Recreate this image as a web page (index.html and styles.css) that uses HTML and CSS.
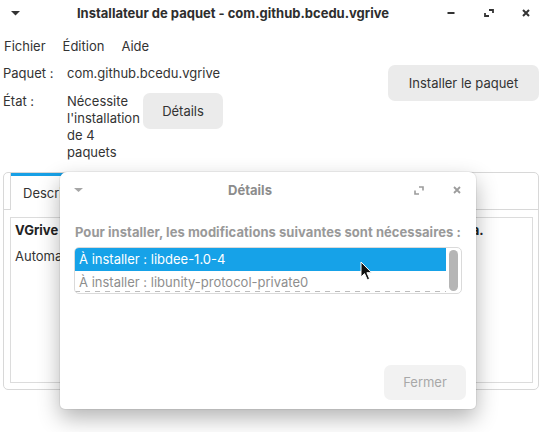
FILE: index.html
```html
<!DOCTYPE html>
<html lang="fr">
<head>
<meta charset="utf-8">
<title>Installateur de paquet</title>
<link rel="stylesheet" href="styles.css">
</head>
<body>
<div class="window">
  <header class="titlebar">
    <div class="tb-menu"><svg width="9" height="5" viewBox="0 0 9 5"><polygon points="0,0 9,0 4.5,4.5" fill="#333"/></svg></div>
    <div class="tb-title">Installateur de paquet - com.github.bcedu.vgrive</div>
    <div class="tb-btn"><svg width="8" height="2" viewBox="0 0 8 2"><rect x="0.5" y="0" width="7" height="2" fill="#333"/></svg></div>
    <div class="tb-btn"><svg width="10" height="8" viewBox="0 0 10 8"><path d="M5 1H9V4M1 4V7H5" fill="none" stroke="#333" stroke-width="1.8"/></svg></div>
    <div class="tb-btn"><svg width="8" height="8" viewBox="0 0 8 8"><path d="M1 1L7 7M7 1L1 7" stroke="#333" stroke-width="2"/></svg></div>
  </header>
  <nav class="menubar"><span>Fichier</span><span>Édition</span><span>Aide</span></nav>
  <section class="info">
    <div class="lbl l1">Paquet :</div>
    <div class="val v1">com.github.bcedu.vgrive</div>
    <button class="btn install">Installer le paquet</button>
    <div class="lbl l2">État :</div>
    <div class="val status">Nécessite l'installation de 4 paquets</div>
    <button class="btn details">Détails</button>
  </section>
  <section class="notebook">
    <div class="tabs">
      <div class="tab active">Description</div>
      <div class="tab">Détails</div>
    </div>
    <div class="page">
      <div class="frame">
        <p class="desc-title">VGrive - a light Google Drive sync client for elementary OS, written in Vala.</p>
        <p class="desc">Automatically syncs your Google Drive files with a local folder.</p>
      </div>
    </div>
  </section>
</div>

<div class="dialog">
  <div class="dlg-head">
    <div class="dlg-menu"><svg width="9" height="5" viewBox="0 0 9 5"><polygon points="0,0 9,0 4.5,4" fill="#a6a6a6"/></svg></div>
    <div class="dlg-title">Détails</div>
    <div class="dlg-btn max"><svg width="10" height="9" viewBox="0 0 10 9"><path d="M5 1H9V4.5M1 4.5V8H5" fill="none" stroke="#9c9c9c" stroke-width="1.6"/></svg></div>
    <div class="dlg-btn close"><svg width="8" height="8" viewBox="0 0 8 8"><path d="M1 1L7 7M7 1L1 7" stroke="#9c9c9c" stroke-width="1.8"/></svg></div>
  </div>
  <div class="dlg-body">
    <p class="dlg-label">Pour installer, les modifications suivantes sont nécessaires :</p>
    <div class="list">
      <div class="list-view">
        <div class="row selected">À installer : libdee-1.0-4</div>
        <div class="row">À installer : libunity-protocol-private0</div>
        <div class="undershoot"></div>
      </div>
      <div class="scroll"><div class="thumb"></div></div>
    </div>
    <div class="dlg-actions"><button class="btn close-btn">Fermer</button></div>
  </div>
</div>

<svg class="cursor" width="13" height="20" viewBox="0 0 13 20"><path d="M1 1V16L4.5 12.6L7.3 18.8L9.6 17.8L6.9 11.7H11.6Z" fill="#111" stroke="#fff" stroke-width="1" stroke-linejoin="round"/></svg>
</body>
</html>
```

FILE: styles.css
```css
* { box-sizing: border-box; }
html, body { margin: 0; padding: 0; }
body {
  width: 544px;
  height: 432px;
  overflow: hidden;
  position: relative;
  background: #fff;
  font-family: Inter, "Noto Sans", sans-serif;
  font-size: 13px;
  line-height: 17px;
  color: #333;
}
p { margin: 0; }
button { font: inherit; color: inherit; border: 0; }

.titlebar { display: flex; align-items: center; height: 26px; }
.tb-menu { width: 34px; padding-left: 11px; display: flex; align-items: center; }
.tb-menu svg, .tb-btn svg, .dlg-menu svg, .dlg-btn svg { display: block; }
.tb-title { flex: 1; text-align: center; font-weight: 700; color: #2e2e2e; white-space: nowrap; }
.tb-btn { width: 38px; height: 26px; display: flex; align-items: center; justify-content: center; }
.tb-btn:last-child { width: 36px; }

.menubar { display: flex; gap: 17px; padding: 12px 0 9px 4px; }

.info {
  display: grid;
  grid-template-columns: 64px 76px auto 1fr auto;
  grid-template-rows: 28px auto;
  padding: 1px 5px 0 3px;
}
.l1 { grid-column: 1; grid-row: 1; }
.v1 { grid-column: 2 / span 3; grid-row: 1; white-space: nowrap; }
.install { grid-column: 5; grid-row: 1 / span 2; align-self: start; }
.l2 { grid-column: 1; grid-row: 2; }
.status { grid-column: 2; grid-row: 2; }
.details { grid-column: 3; grid-row: 2; align-self: start; }

.btn {
  height: 36px;
  padding: 0 18px;
  background: #ebebeb;
  border-radius: 7px;
  display: flex;
  align-items: center;
  justify-content: center;
  white-space: nowrap;
}
.details { width: 80px; padding: 0; }
.install { width: 151px; padding: 0; }

.notebook {
  margin: 11px 5px 0 3px;
  height: 218px;
  border: 1px solid #d8d8d8;
  border-radius: 5px;
  display: flex;
  flex-direction: column;
}
.tabs { display: flex; height: 37px; padding-left: 6px; border-bottom: 1px solid #d8d8d8; }
.tab { height: 37px; padding: 3px 12px 0; display: flex; align-items: center; }
.tab.active {
  background: #fff;
  border-left: 1px solid #d8d8d8;
  border-right: 1px solid #d8d8d8;
  box-shadow: inset 0 3px 0 #17a0e6;
  margin-bottom: -1px;
  height: 37px;
}
.page { flex: 1; padding: 7px 5px 6px 6px; display: flex; }
.frame { flex: 1; border: 1px solid #dcdcdc; padding: 4px; overflow: hidden; }
.desc-title { font-weight: 700; color: #222; white-space: nowrap; margin-bottom: 9px; word-spacing: -0.2px; }
.desc { white-space: nowrap; }

.dialog {
  position: absolute;
  left: 60px;
  top: 172px;
  width: 416px;
  height: 237px;
  background: #fff;
  border-radius: 7px 7px 5px 5px;
  box-shadow: 0 9px 22px rgba(0,0,0,0.3), 0 0 0 1px rgba(0,0,0,0.05);
  display: flex;
  flex-direction: column;
}
.dlg-head { height: 36px; display: flex; align-items: center; }
.dlg-menu { width: 40px; padding-left: 14px; }
.dlg-title { flex: 1; text-align: center; font-weight: 700; color: #8c8c8c; }
.dlg-btn { width: 38px; display: flex; justify-content: center; }
.dlg-body { flex: 1; display: flex; flex-direction: column; padding: 0 14px 9px 14px; }
.dlg-label { margin: 16px 0 0 1px; font-weight: 700; color: #999; white-space: nowrap; letter-spacing: 0.05px; }
.list {
  margin-top: 6px;
  height: 47px;
  border: 1px solid #dadada;
  border-radius: 5px;
  display: flex;
  overflow: hidden;
}
.list-view { flex: 1; position: relative; overflow: hidden; }
.row { height: 23px; padding-left: 4px; display: flex; align-items: center; color: #8e8e8e; white-space: nowrap; }
.row.selected { background: #16a2e8; color: #fff; }
.undershoot {
  position: absolute;
  left: 0; right: 0; bottom: 1px;
  height: 1px;
  background: repeating-linear-gradient(to right, #bdbdbd 0 5px, transparent 5px 10px);
}
.scroll { width: 15px; padding: 2px 3px 2px 3px; }
.thumb { height: 100%; background: #b5b5b5; border-radius: 5px; }
.dlg-actions { margin-top: auto; display: flex; justify-content: flex-end; margin-right: -4px; }
.close-btn { width: 82px; height: 35px; padding: 0; background: #f2f2f2; color: #a8a8a8; }

.cursor { position: absolute; left: 360px; top: 261px; }
```
